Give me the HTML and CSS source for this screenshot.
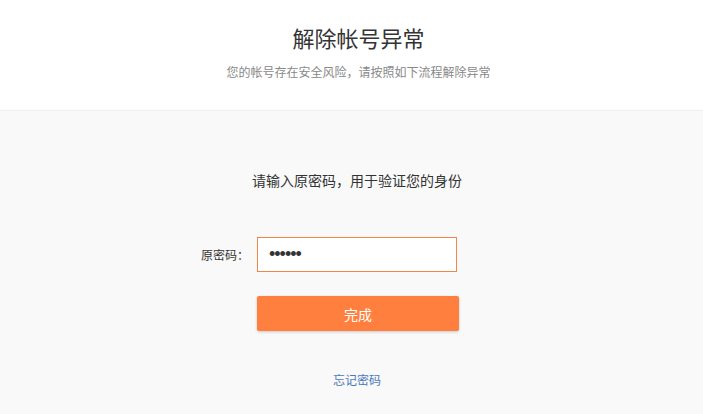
FILE: index.html
```html
<!DOCTYPE html>
<html lang="zh-CN">
<head>
  <meta charset="UTF-8">
  <title>解除帐号异常</title>
  <link rel="stylesheet" href="styles.css">
</head>
<body>
  <!-- 顶部标题 -->
  <div class="header">
    <h1>解除帐号异常</h1>
    <p class="sub">您的帐号存在安全风险，请按照如下流程解除异常</p>
  </div>

  <!-- 验证原密码 -->
  <div class="main">
    <p class="tip">请输入原密码，用于验证您的身份</p>
    <div class="row">
      <label for="oldPwd">原密码：</label>
      <input type="password" id="oldPwd" value="123456" autofocus>
    </div>
    <div class="row">
      <button class="btn">完成</button>
    </div>
    <a href="#" class="forget">忘记密码</a>
  </div>
</body>
</html>
```

FILE: styles.css
```css
body {
  margin: 0;
  font-family: "Microsoft YaHei", "Noto Sans CJK SC", "Liberation Sans", sans-serif;
  background-color: #f9f9f9;
  color: #333;
}
.header {
  background-color: #fff;
  border-bottom: 1px solid #eee;
  height: 111px;
  padding-left: 14px;
  text-align: center;
  box-sizing: border-box;
  padding-top: 22px;
}
.header h1 {
  margin: 0;
  font-size: 22px;
  font-weight: normal;
  line-height: 30px;
  color: #333;
}
.sub {
  margin: 12px 0 0;
  font-size: 12px;
  line-height: 16px;
  color: #888;
}
.main {
  padding-left: 11px;
  padding-top: 59px;
  text-align: center;
}
.tip {
  margin: 0;
  font-size: 14px;
  line-height: 20px;
}
.row {
  display: grid;
  grid-template-columns: 1fr 200px 1fr;
  align-items: center;
}
.row label {
  grid-column: 1;
  justify-self: end;
  margin-top: 47px;
  padding-right: 8px;
  font-size: 12px;
}
.row input {
  grid-column: 2;
  box-sizing: border-box;
  width: 200px;
  height: 35px;
  margin-top: 47px;
  padding: 0 11px;
  border: 1px solid #f0864c;
  background: #fff;
  font-size: 18px;
  letter-spacing: -1px;
  color: #333;
  outline: none;
}
.btn {
  grid-column: 2;
  width: 202px;
  height: 35px;
  margin-top: 24px;
  border: none;
  border-radius: 2px;
  background-color: #ff7f3e;
  color: #fff;
  font-family: inherit;
  font-size: 14px;
  box-shadow: 0 1px 3px rgba(0,0,0,0.2);
  cursor: pointer;
}
.forget {
  display: inline-block;
  margin-top: 40px;
  font-size: 12px;
  color: #4a78bb;
  text-decoration: none;
}
```
